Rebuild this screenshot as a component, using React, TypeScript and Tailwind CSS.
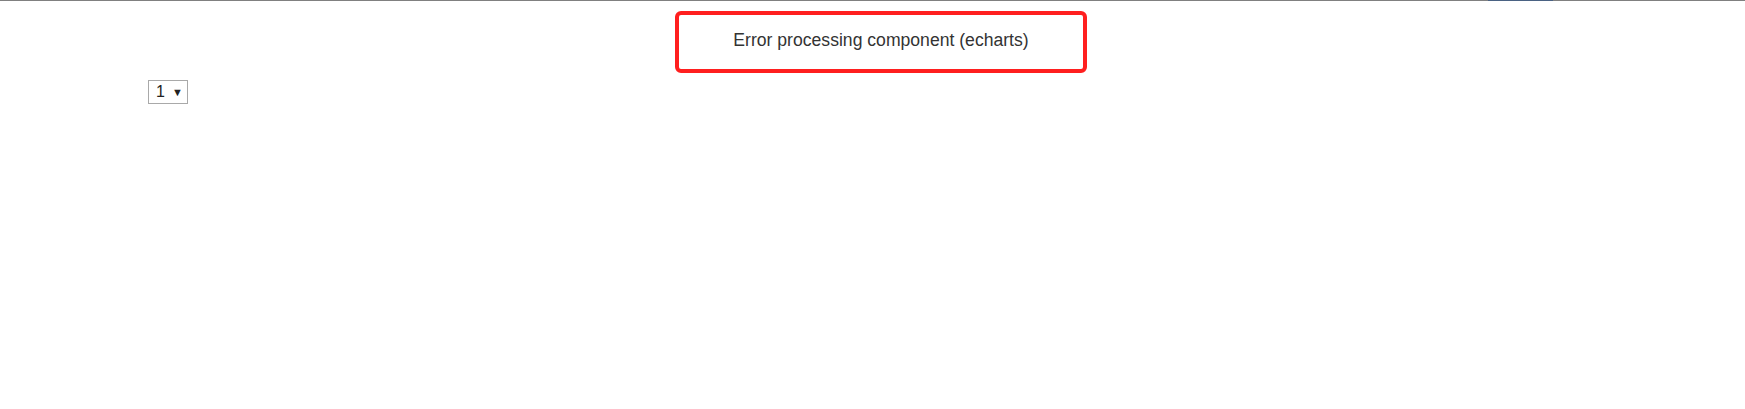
const App = () => {
  return (
    <div className="w-full h-[409px] bg-white font-['Liberation_Sans',Arial,sans-serif]">
      <div className="relative h-px bg-[#808080]">
        <div className="absolute left-[1488px] top-0 h-px w-[65px] bg-[#4a6283]" />
      </div>
      <div className="ml-[675px] mt-[10px] w-[412px] h-[62px] border-4 border-[#ff1f1f] rounded-[6px] flex justify-center pt-[15px]">
        <span className="text-[17.6px] leading-[20px] text-[#333333]">
          Error processing component (echarts)
        </span>
      </div>
      <div className="ml-[148px] mt-[7px] w-[40px] h-[24px] border border-[#a9a9a9] flex items-center pl-[7px] gap-[7px] text-[#222222]">
        <span className="text-[16px] leading-none">1</span>
        <span className="text-[11px] leading-none">▼</span>
      </div>
    </div>
  );
};

export default App;
